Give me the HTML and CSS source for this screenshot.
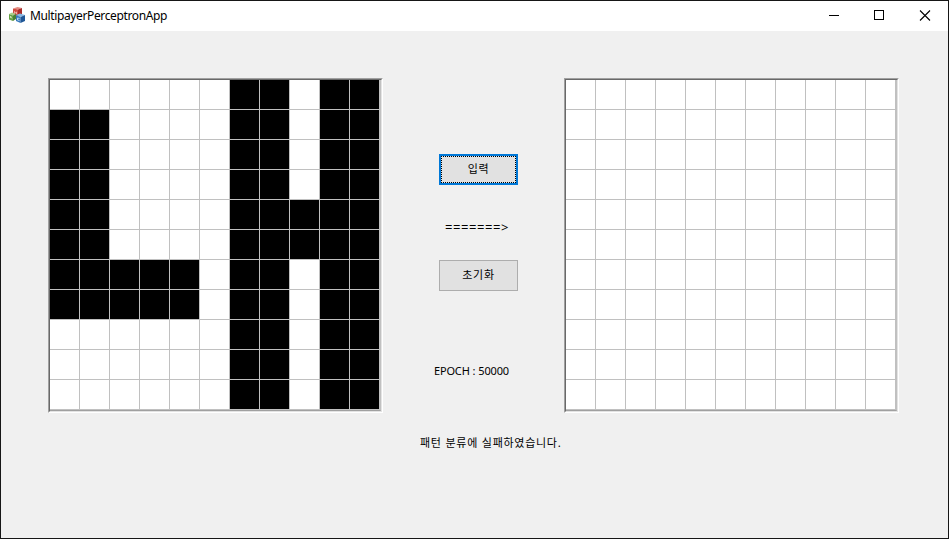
FILE: index.html
```
<!DOCTYPE html>
<html lang="ko">
<head>
<meta charset="utf-8">
<title>MultipayerPerceptronApp</title>
<link rel="stylesheet" href="styles.css">
</head>
<body>
<div class="window">
  <header class="titlebar">
    <svg class="app-icon" width="16" height="16" viewBox="0 0 16 16">
      <path fill="#e58a80" d="M4 1.500 8.500 0 13 1 9 2.500z"/>
      <path fill="#cf4a40" d="M4 1.500l5 1V9L4 7z"/>
      <path fill="#a92b28" d="M9 2.500 13 1v6L9 9z"/>
      <path fill="#a9ce88" d="M0 7l3-1.500L7 7 4 8.500z"/>
      <path fill="#65a044" d="M0 7l4 1.500V14L0 12.500z"/>
      <path fill="#4a8134" d="M4 8.500L7 7v5l-3 2z"/>
      <path fill="#86b6e2" d="M7 8l4-1.500L16 8l-5 2z"/>
      <path fill="#3779bc" d="M7 8l4.500 2v6L7 14z"/>
      <path fill="#205797" d="M11.500 10 16 8v6l-4.500 2z"/>
      <path fill="none" stroke="#f3c4bd" stroke-width=".8" d="M5.500 6.500v-2l1 1 1-.5v2"/>
      <path fill="none" stroke="#d1e7f5" stroke-width=".8" d="M10.500 11.500l-2-.5v2l2 .5"/>
      <path fill="none" stroke="#d3e7bd" stroke-width=".8" d="M1.500 11V9l1.500 2.500"/>
    </svg>
    <h1 class="title">MultipayerPerceptronApp</h1>
    <svg class="controls" width="138" height="30" viewBox="-1 0 138 30" fill="none" stroke="#000">
      <path d="M18 14.500h10M63.500 9.500h9v9h-9z" shape-rendering="crispEdges"/>
      <path d="M109 9.500l10 10M119 9.500l-10 10" stroke-width="1.100"/>
    </svg>
  </header>
  <main class="content">
    <div class="frame">
      <div class="edge">
        <svg class="board" width="330" height="330" viewBox="0 0 330 330" shape-rendering="crispEdges">
          <path d="M0 30h60v150h90v60H0zM180 0h60v120h30V0h60v330h-60V180h-30v150h-60z"/>
          <path class="lines" d="M29.500 0v330m30-330v330m30-330v330m30-330v330m30-330v330m30-330v330m30-330v330m30-330v330m30-330v330m30-330v330m30-330v330M0 29.500h330m-330 30h330m-330 30h330m-330 30h330m-330 30h330m-330 30h330m-330 30h330m-330 30h330m-330 30h330m-330 30h330m-330 30h330"/>
        </svg>
      </div>
    </div>
    <section class="panel">
      <button class="button focused"><span>입력</span></button>
      <p class="arrow">=======&gt;</p>
      <button class="button"><span>초기화</span></button>
      <p class="epoch">EPOCH : 50000</p>
      <p class="status">패턴 분류에 실패하였습니다.</p>
    </section>
    <div class="frame">
      <div class="edge">
        <svg class="board" width="330" height="330" viewBox="0 0 330 330" shape-rendering="crispEdges">
          <path class="lines" d="M29.500 0v330m30-330v330m30-330v330m30-330v330m30-330v330m30-330v330m30-330v330m30-330v330m30-330v330m30-330v330m30-330v330M0 29.500h330m-330 30h330m-330 30h330m-330 30h330m-330 30h330m-330 30h330m-330 30h330m-330 30h330m-330 30h330m-330 30h330m-330 30h330"/>
        </svg>
      </div>
    </div>
  </main>
</div>
</body>
</html>
```
FILE: styles.css
```
* { box-sizing: border-box; }
body {
  margin: 0;
  font-family: "Noto Sans", "Noto Sans CJK KR", sans-serif;
  color: #000;
}
.window {
  width: 949px;
  height: 539px;
  border: 1px solid #161616;
  background: #f0f0f0;
  overflow: hidden;
}
.titlebar {
  display: flex;
  height: 30px;
  background: #fff;
}
.app-icon { margin: 6px 0 0 8px; }
.title {
  margin: 0 0 0 5px;
  font: 12px/29px "Noto Sans", sans-serif;
  letter-spacing: -0.370px;
}
.controls { margin-left: auto; }
.content {
  display: flex;
  align-items: flex-start;
  padding: 47px 0 0 47px;
}
.frame {
  flex: none;
  border: 1px solid;
  border-color: #a0a0a0 #fff #fff #a0a0a0;
}
.edge {
  border: 1px solid;
  border-color: #696969 #e3e3e3 #e3e3e3 #696969;
}
.board {
  display: block;
  box-sizing: content-box;
  background: #fff;
  border: solid;
  border-width: 0 1px 1px 0;
  border-color: #c0c0c0 #c0c0c0 #a0a0a0;
}
.lines { stroke: #c0c0c0; fill: none; }
.panel {
  width: 181px;
  flex: none;
  padding-top: 76px;
}
.button {
  display: block;
  width: 79px;
  height: 31px;
  margin-left: 56px;
  padding: 0 0 2px;
  border: 1px solid #adadad;
  background: #e1e1e1;
  color: #000;
  font: 11px/25px "Noto Sans CJK KR", sans-serif;
  letter-spacing: 0.700px;
}
.focused {
  border: 2px solid #0078d7;
  outline: 1px dotted #000;
  outline-offset: -3px;
}
.panel p {
  margin: 0;
  font-size: 11px;
  line-height: 16px;
  white-space: nowrap;
}
.panel .arrow {
  margin: 34px 0 25px 62px;
  font-size: 13px;
  letter-spacing: 0.550px;
}
.panel .epoch {
  margin: 72px 0 0 51px;
  letter-spacing: -0.170px;
  word-spacing: 0.300px;
}
.panel .status {
  margin: 55px 0 0 37px;
  font-family: "Noto Sans CJK KR", sans-serif;
  letter-spacing: 0.720px;
}
```
